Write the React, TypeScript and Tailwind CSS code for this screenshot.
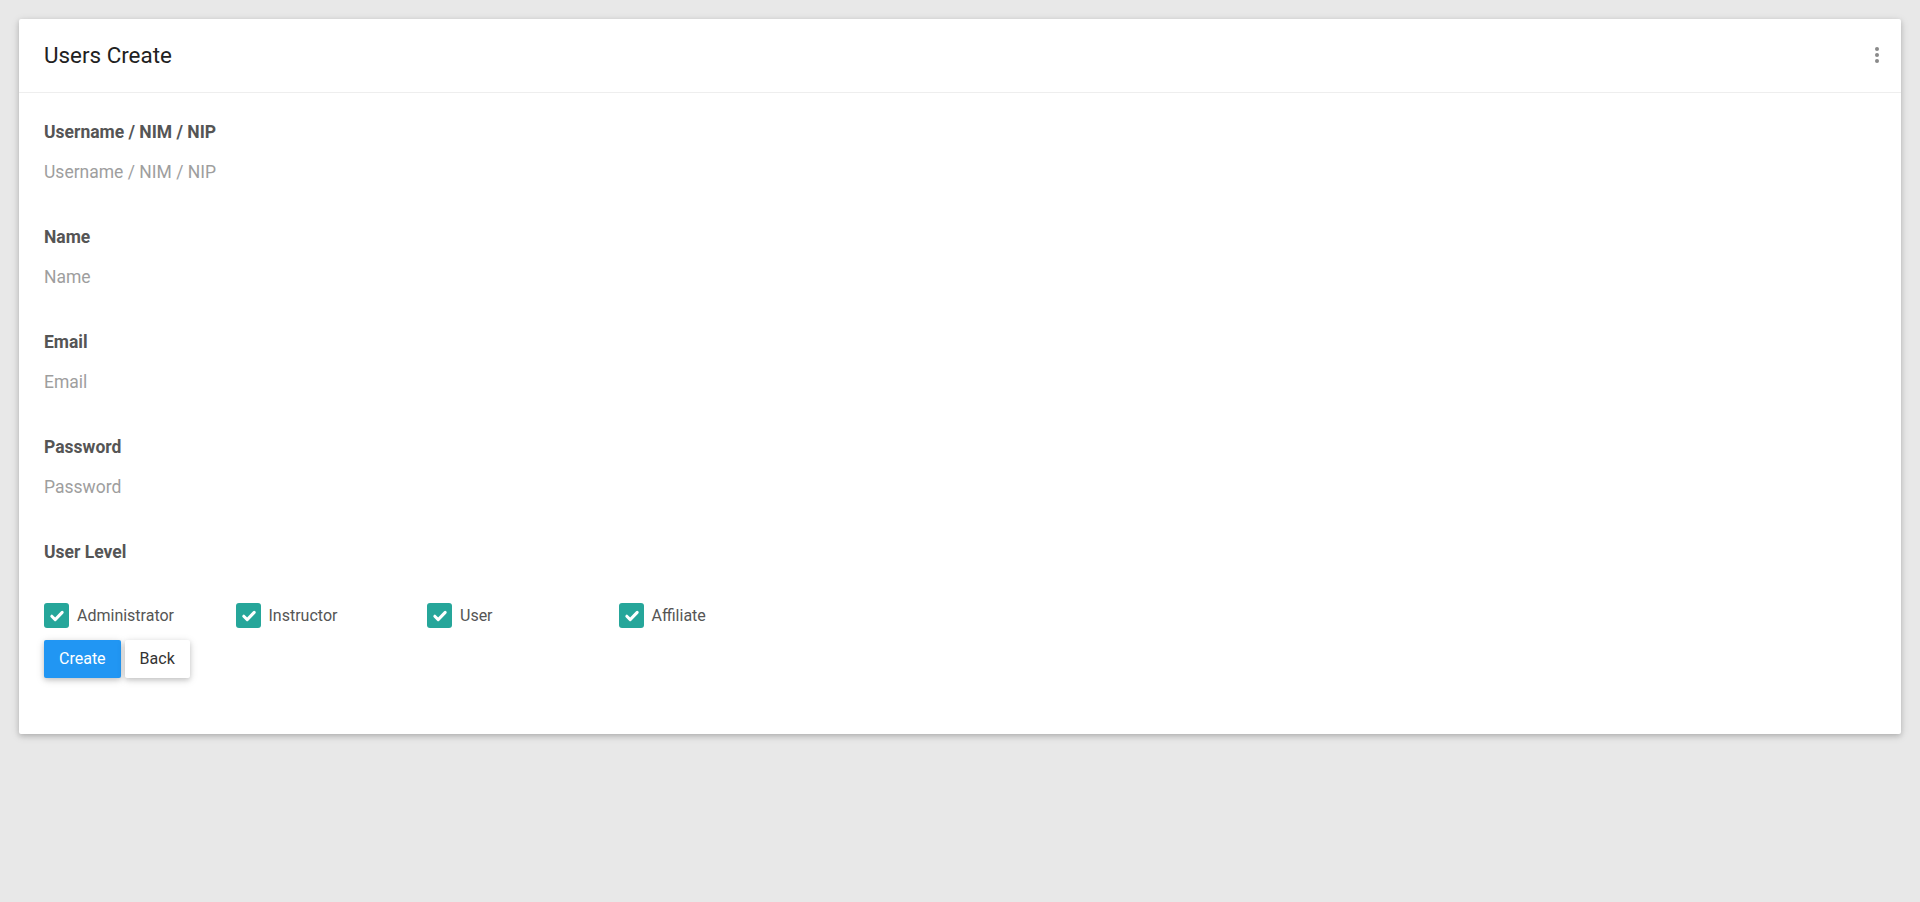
import React from "react";

const fields = [
  { label: "Username / NIM / NIP", type: "text" },
  { label: "Name", type: "text" },
  { label: "Email", type: "email" },
  { label: "Password", type: "password" },
];

const levels = ["Administrator", "Instructor", "User", "Affiliate"];

function CheckBox({ label }: { label: string }) {
  return (
    <label className="flex items-center w-[191.5px] cursor-pointer">
      <span className="flex items-center justify-center w-[25px] h-[25px] rounded-[3px] bg-[#26a69a]">
        <svg width="25" height="25" viewBox="0 0 25 25" fill="none">
          <path
            d="M7.8 13.2 L11.2 16.6 L18.2 9.4"
            stroke="#fff"
            strokeWidth="3"
            strokeLinecap="round"
            strokeLinejoin="round"
          />
        </svg>
      </span>
      <span className="ml-2 text-base text-[#555]">{label}</span>
    </label>
  );
}

export default function App() {
  return (
    <div
      className="min-h-[902px] bg-[#e8e8e8] px-[19px] pt-[19px]"
      style={{ fontFamily: "Roboto, 'Liberation Sans', sans-serif" }}
    >
      <div className="bg-white rounded-[2px] shadow-[0_2px_5px_0_rgba(0,0,0,0.16),0_2px_10px_0_rgba(0,0,0,0.12)]">
        {/* header */}
        <div className="flex items-center justify-between h-[74px] pl-[25px] pr-[21px] border-b border-[#eeeeee]">
          <h1 className="text-[22.4px] text-[#212121]">Users Create</h1>
          <svg width="6" height="18" viewBox="0 0 6 18" className="mb-[2px]">
            <circle cx="3" cy="3" r="2" fill="#8a8a8a" />
            <circle cx="3" cy="9" r="2" fill="#8a8a8a" />
            <circle cx="3" cy="15" r="2" fill="#8a8a8a" />
          </svg>
        </div>

        {/* form */}
        <form className="pl-[25px] pr-[25px] pt-[27px] pb-[56px]">
          {fields.map((f) => (
            <div key={f.label} className="mb-[33px]">
              <div className="text-[17.5px] leading-6 font-bold text-[#555]">
                {f.label}
              </div>
              <input
                type={f.type}
                placeholder={f.label}
                className="mt-2 block w-full h-10 text-[17.5px] text-[#333] outline-none placeholder:text-[#9e9e9e]"
              />
            </div>
          ))}

          <div className="text-[17.5px] leading-6 font-bold text-[#555]">
            User Level
          </div>

          <div className="flex mt-[39px]">
            {levels.map((l) => (
              <CheckBox key={l} label={l} />
            ))}
          </div>

          <div className="flex gap-1 mt-[12px]">
            <button
              type="button"
              className="h-[38px] px-[15px] rounded-[2px] bg-[#2196f3] text-base text-white shadow-[0_2px_5px_0_rgba(0,0,0,0.16),0_2px_10px_0_rgba(0,0,0,0.12)]"
            >
              Create
            </button>
            <button
              type="button"
              className="h-[38px] px-[15px] rounded-[2px] bg-white text-base text-[#333] shadow-[0_2px_5px_0_rgba(0,0,0,0.16),0_2px_10px_0_rgba(0,0,0,0.12)]"
            >
              Back
            </button>
          </div>
        </form>
      </div>
    </div>
  );
}
